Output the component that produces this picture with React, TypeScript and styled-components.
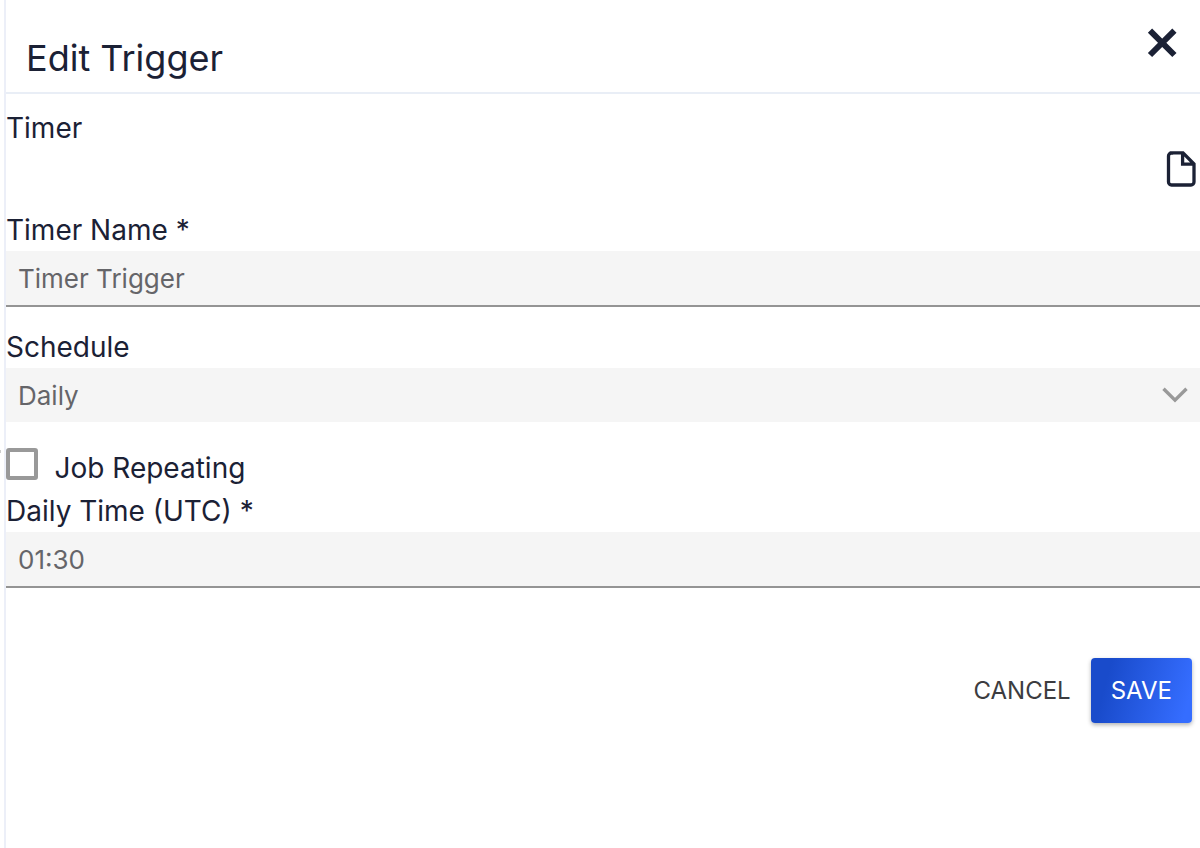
import React, { useState } from "react";
import styled, { createGlobalStyle } from "styled-components";

const App = () => {
  const [name, setName] = useState("Timer Trigger");
  const [time, setTime] = useState("01:30");
  const [repeating, setRepeating] = useState(false);

  return (
    <Page>
      <GlobalStyle />
      <Gutter>
        <Handle />
      </Gutter>
      <Panel>
        <Header>
          <Title>Edit Trigger</Title>
          <IconButton aria-label="Close">
            <svg width="30" height="30" viewBox="0 0 30 30">
              <path
                d="M3 2.6 27.4 27M27.4 2.6 3 27"
                stroke="#1b2135"
                strokeWidth="6"
              />
            </svg>
          </IconButton>
        </Header>
        <Label as="div">Timer</Label>
        <Tools>
          <IconButton aria-label="Documentation">
            <svg width="30" height="36" viewBox="0 0 30 36" fill="none">
              <path
                d="M5.5 1.9H17L28 13V31a3 3 0 0 1-3 3H5.5a3 3 0 0 1-3-3V5a3 3 0 0 1 3-3ZM16.6 1.9V13.2H28"
                stroke="#1b2135"
                strokeWidth="3.3"
              />
            </svg>
          </IconButton>
        </Tools>
        <Field $gap={19}>
          <Label htmlFor="name">Timer Name *</Label>
          <Input id="name" value={name} onChange={(e) => setName(e.target.value)} />
        </Field>
        <Field $gap={26}>
          <Label as="div">Schedule</Label>
          <Select>
            <span>Daily</span>
            <svg width="26" height="16" viewBox="0 0 26 16" fill="none">
              <path d="M1.5 1.7 13 13.2 24.5 1.7" stroke="#999" strokeWidth="3.4" />
            </svg>
          </Select>
        </Field>
        <CheckRow onClick={() => setRepeating(!repeating)}>
          <Checkbox $checked={repeating} />
          <CheckLabel>Job Repeating</CheckLabel>
        </CheckRow>
        <Field $gap={70}>
          <Label htmlFor="time">Daily Time (UTC) *</Label>
          <Input id="time" value={time} onChange={(e) => setTime(e.target.value)} />
        </Field>
        <Actions>
          <Button>CANCEL</Button>
          <Button $primary>SAVE</Button>
        </Actions>
      </Panel>
    </Page>
  );
};

export default App;

const GlobalStyle = createGlobalStyle`
  * {
    box-sizing: border-box;
  }

  body {
    margin: 0;
    background: #fff;
    color: #1b2135;
    font-family: Inter, "Liberation Sans", sans-serif;
    overflow: hidden;
  }

  svg {
    display: block;
  }
`;

const Page = styled.div`
  display: flex;
  height: 100vh;
`;

const Gutter = styled.div`
  width: 4px;
  padding-top: 450px;
`;

const Handle = styled.div`
  width: 1px;
  height: 3px;
  background: #ccc;
`;

const Panel = styled.div`
  flex: 1;
  display: flex;
  flex-direction: column;
  border-left: 2px solid #eceff8;
`;

const Header = styled.div`
  display: flex;
  justify-content: space-between;
  align-items: flex-start;
  height: 94px;
  margin-bottom: 13px;
  padding: 28px 23px 0 20px;
  border-bottom: 2px solid #e9eef6;
`;

const Title = styled.h1`
  margin: 6px 0 0;
  font-size: 36px;
  font-weight: 400;
  line-height: 48px;
`;

const IconButton = styled.button`
  padding: 0;
  border: none;
  background: none;
  cursor: pointer;
`;

const Tools = styled.div`
  display: flex;
  justify-content: flex-end;
  align-items: flex-start;
  height: 60px;
  padding: 2px 4px 0 0;
`;

const Field = styled.div<{ $gap: number }>`
  display: flex;
  flex-direction: column;
  margin-bottom: ${({ $gap }) => $gap}px;
`;

const Label = styled.label`
  font-size: 28px;
  line-height: 42px;
`;

const Input = styled.input`
  height: 56px;
  padding: 0 12px;
  border: none;
  border-bottom: 2px solid #949494;
  border-radius: 0;
  outline: none;
  background: #f5f5f5;
  color: #656569;
  font-family: inherit;
  font-size: 26px;
`;

const Select = styled.div`
  display: flex;
  align-items: center;
  justify-content: space-between;
  height: 54px;
  padding: 0 12px;
  background: #f5f5f5;
  color: #656569;
  font-size: 26px;
`;

const CheckRow = styled.div`
  display: flex;
  height: 42px;
  gap: 16.5px;
  cursor: pointer;
`;

const Checkbox = styled.div<{ $checked: boolean }>`
  width: 32px;
  height: 32px;
  border: 4px solid #999;
  border-radius: 3px;
  background: ${({ $checked }) => ($checked ? "#356dff" : "#fff")};
`;

const CheckLabel = styled.span`
  font-size: 28px;
  line-height: 40px;
`;

const Actions = styled.div`
  display: flex;
  justify-content: flex-end;
  padding-right: 8px;
`;

const Button = styled.button<{ $primary?: boolean }>`
  height: 65px;
  padding: 0 20px;
  border: none;
  border-radius: 4px;
  background: ${({ $primary }) =>
    $primary ? "linear-gradient(105deg, #194bcb 18%, #356dff 92%)" : "none"};
  box-shadow: ${({ $primary }) => ($primary ? "0 2px 4px rgba(0, 0, 0, 0.3)" : "none")};
  color: ${({ $primary }) => ($primary ? "#fff" : "#3c3c40")};
  font-family: inherit;
  font-size: 24px;
  cursor: pointer;
`;
